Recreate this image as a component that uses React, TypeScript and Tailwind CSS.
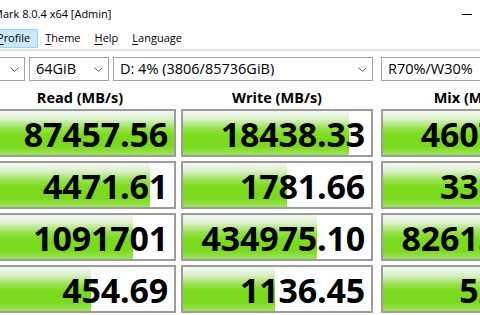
import React from 'react';

interface ScoreRow {
  read: string;
  readBar: number;
  write: string;
  writeBar: number;
  mix: string;
  mixBar: number;
}

const rows: ScoreRow[] = [
  { read: '87457.56', readBar: 188, write: '18438.33', writeBar: 166, mix: '46071.29', mixBar: 188 },
  { read: '4471.61', readBar: 164, write: '1781.66', writeBar: 104, mix: '3318.47', mixBar: 188 },
  { read: '1091701', readBar: 147, write: '434975.10', writeBar: 134, mix: '826135.42', mixBar: 188 },
  { read: '454.69', readBar: 105, write: '1136.45', writeBar: 92, mix: '527.84', mixBar: 188 },
];

function Chevron() {
  return (
    <svg width="9" height="5" viewBox="0 0 9 5" className="shrink-0">
      <polyline points="0.5,0.5 4.5,4.5 8.5,0.5" fill="none" stroke="#5f5f5f" strokeWidth="1" />
    </svg>
  );
}

function Combo({ label, width, margin }: { label: string; width: string; margin: string }) {
  return (
    <div className={`${width} ${margin} h-[24px] shrink-0 border border-[#a3a3a3] bg-white flex items-center pl-[6px] pr-[5px]`}>
      <span className="flex-1 whitespace-nowrap overflow-hidden text-[14.5px] text-black leading-none">{label}</span>
      <Chevron />
    </div>
  );
}

function ScoreCell({ value, bar, margin }: { value: string; bar: number; margin: string }) {
  return (
    <div className={`${margin} relative w-[192px] h-[48px] shrink-0 border-2 border-[#9c9c9c] bg-white overflow-hidden`}>
      <div
        className="absolute left-0 top-0 bottom-0 bg-[linear-gradient(to_bottom,#f4f7f1_0%,#dcf0cd_18%,#96e14c_40%,#7bdb1d_55%,#7ad81e_80%,#9ee65a_100%)]"
        style={{ width: bar }}
      />
      <div className="relative h-full flex items-center justify-end pr-[6px] pt-px">
        <span className="text-[34px] font-bold text-black leading-none tracking-[-0.2px]">{value}</span>
      </div>
    </div>
  );
}

export default function App() {
  return (
    <div className="w-[480px] h-[315px] overflow-hidden bg-white font-['Open_Sans',sans-serif] text-black">
      {/* title bar */}
      <div className="h-[28px] flex items-center justify-between">
        <span className="-ml-[7px] text-[11px] whitespace-nowrap">Mark 8.0.4 x64 [Admin]</span>
        <div className="w-[10px] h-px bg-black mr-[8px]" />
      </div>

      {/* menu bar */}
      <div className="h-[21px] flex items-start text-[11px] whitespace-nowrap">
        <div className="-ml-[11px] mt-px h-[19px] px-[7px] flex items-center bg-[#cce8ff] border border-[#99d1ff]">
          <span><u className="underline-offset-2">P</u>rofile</span>
        </div>
        <div className="mt-px h-[19px] px-[7px] flex items-center">
          <span><u className="underline-offset-2">T</u>heme</span>
        </div>
        <div className="mt-px h-[19px] px-[7px] flex items-center">
          <span><u className="underline-offset-2">H</u>elp</span>
        </div>
        <div className="mt-px h-[19px] px-[7px] flex items-center">
          <span><u className="underline-offset-2">L</u>anguage</span>
        </div>
      </div>
      <div className="h-[2px] bg-[#e3e3e3]" />

      {/* combos */}
      <div className="-ml-[16px] mt-[6px] flex w-[600px]">
        <Combo label="5" width="w-[41px]" margin="" />
        <Combo label="64GiB" width="w-[80px]" margin="ml-[4px]" />
        <Combo label="D: 4% (3806/85736GiB)" width="w-[260px]" margin="ml-[4px]" />
        <Combo label="R70%/W30%" width="w-[192px]" margin="ml-[8px]" />
      </div>

      {/* headers */}
      <div className="-ml-[16px] h-[28px] flex items-end w-[600px] text-[14.5px] font-bold whitespace-nowrap">
        <div className="w-[192px] text-center">Read (MB/s)</div>
        <div className="w-[192px] ml-[5px] text-center">Write (MB/s)</div>
        <div className="w-[192px] ml-[8px] pr-[10px] text-center">Mix (MB/s)</div>
      </div>

      {/* scores */}
      <div className="-ml-[16px] flex flex-col gap-[4px] w-[600px]">
        {rows.map((r) => (
          <div key={r.read} className="flex">
            <ScoreCell value={r.read} bar={r.readBar} margin="" />
            <ScoreCell value={r.write} bar={r.writeBar} margin="ml-[5px]" />
            <ScoreCell value={r.mix} bar={r.mixBar} margin="ml-[8px]" />
          </div>
        ))}
      </div>
    </div>
  );
}
